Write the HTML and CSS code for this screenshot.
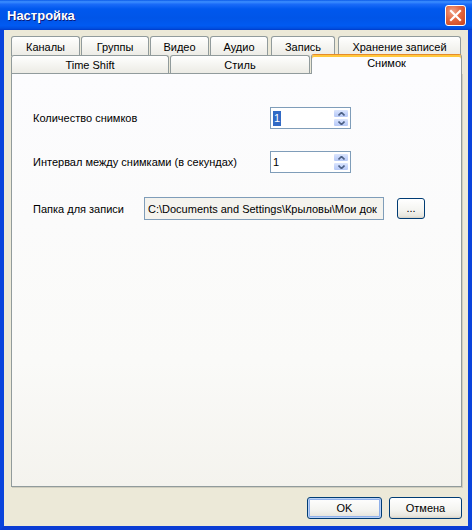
FILE: index.html
```html
<!DOCTYPE html>
<html lang="ru">
<head>
<meta charset="utf-8">
<title>Настройка</title>
<link rel="stylesheet" href="styles.css">
</head>
<body>
<div class="window">
  <div class="titlebar">
    <span class="title">Настройка</span>
    <span class="close">
      <svg width="13" height="13" viewBox="0 0 13 13"><path d="M2 2 L11 11 M11 2 L2 11" stroke="#fff" stroke-width="2.2" stroke-linecap="square"/></svg>
    </span>
  </div>
  <div class="frame">
    <div class="tabs">
      <div class="tabrow row1">
        <div class="tab t-kan">Каналы</div>
        <div class="tab t-grp">Группы</div>
        <div class="tab t-vid">Видео</div>
        <div class="tab t-aud">Аудио</div>
        <div class="tab t-zap">Запись</div>
        <div class="tab t-hran">Хранение записей</div>
      </div>
      <div class="tabrow row2">
        <div class="tab t-ts">Time Shift</div>
        <div class="tab t-stil">Стиль</div>
        <div class="tab t-snim active">Снимок</div>
      </div>
    </div>
    <div class="panel">
      <div class="row row-count">
        <span class="lbl lbl-wide">Количество снимков</span>
        <div class="spin">
          <span class="val"><span class="sel">1</span></span>
          <span class="spinbtns">
            <span class="sb"><svg width="7" height="4" viewBox="0 0 7 4"><path d="M0.5 3.5 L3.5 0.5 L6.5 3.5" fill="none" stroke="#4D6185" stroke-width="1.6"/></svg></span>
            <span class="sb"><svg width="7" height="4" viewBox="0 0 7 4"><path d="M0.5 0.5 L3.5 3.5 L6.5 0.5" fill="none" stroke="#4D6185" stroke-width="1.6"/></svg></span>
          </span>
        </div>
      </div>
      <div class="row row-interval">
        <span class="lbl lbl-wide">Интервал между снимками (в секундах)</span>
        <div class="spin">
          <span class="val">1</span>
          <span class="spinbtns">
            <span class="sb"><svg width="7" height="4" viewBox="0 0 7 4"><path d="M0.5 3.5 L3.5 0.5 L6.5 3.5" fill="none" stroke="#4D6185" stroke-width="1.6"/></svg></span>
            <span class="sb"><svg width="7" height="4" viewBox="0 0 7 4"><path d="M0.5 0.5 L3.5 3.5 L6.5 0.5" fill="none" stroke="#4D6185" stroke-width="1.6"/></svg></span>
          </span>
        </div>
      </div>
      <div class="row row-folder">
        <span class="lbl lbl-short">Папка для записи</span>
        <div class="field">C:\Documents and Settings\Крыловы\Мои док</div>
        <button class="btn browse">...</button>
      </div>
    </div>
    <div class="footer">
      <button class="btn ok">OK</button>
      <button class="btn cancel">Отмена</button>
    </div>
  </div>
</div>
</body>
</html>
```
FILE: styles.css
```css
* { box-sizing: border-box; }
html, body { margin: 0; padding: 0; background: #fff; }
body { font-family: "Liberation Sans", Arial, sans-serif; font-size: 11px; color: #000; }

.window { width: 472px; height: 530px; display: flex; flex-direction: column; }

.titlebar {
  height: 30px;
  display: flex;
  align-items: center;
  justify-content: space-between;
  padding: 0 6px 0 7px;
  background: linear-gradient(to bottom, #0A5AE8 0%, #3D8FFF 6%, #1A6BF8 14%, #0058EE 30%, #0055E8 60%, #005AF2 85%, #0050E2 94%, #003BCB 100%);
}
.title {
  color: #fff;
  font-weight: bold;
  font-size: 13px;
  text-shadow: 1px 1px 0 #0A1C7A;
}
.close {
  width: 21px; height: 21px;
  border: 1px solid #fff;
  border-radius: 3px;
  display: flex; align-items: center; justify-content: center;
  background: radial-gradient(circle at 35% 30%, #F0A48A 0%, #E2663F 45%, #C8421C 100%);
  margin-top: 1px;
}

.frame {
  flex: 1;
  display: flex;
  flex-direction: column;
  background: #ECE9D8;
  border-left: 4px solid #0A44DC;
  border-right: 4px solid #0A44DC;
  border-bottom: 4px solid #0A3CD4;
  padding: 6px 6px 0 7px;
}

.tabs { display: flex; flex-direction: column; }
.tabrow { display: flex; position: relative; }
.row1 { height: 19px; }
.row2 { height: 18px; z-index: 1; }

.tab {
  height: 100%;
  display: flex;
  align-items: center;
  justify-content: center;
  border: 1px solid #919B9C;
  border-bottom: none;
  border-radius: 3px 3px 0 0;
  background: linear-gradient(to bottom, #FFFFFF 0%, #F7F7F4 40%, #ECEBE5 100%);
  white-space: nowrap;
}
.row1 .tab { height: 20px; }

.t-kan { width: 69px; margin-right: 1px; }
.t-grp { width: 68px; margin-right: 1px; }
.t-vid { width: 59px; margin-right: 1px; }
.t-aud { width: 58px; margin-right: 3px; }
.t-zap { width: 64px; margin-right: 3px; }
.t-hran { width: 123px; }

.t-ts { width: 158px; margin-right: 1px; }
.t-stil { width: 140px; margin-right: 1px; }
.t-snim { width: 151px; }

.tab.active {
  height: 20px;
  margin-top: -1px;
  margin-bottom: -1px;
  background: #FCFCFE;
  border-top: 1px solid #E68B2C;
  box-shadow: inset 0 2px 0 #FFC83C;
  padding-bottom: 3px;
  position: relative;
  z-index: 2;
}

.panel {
  flex: 1;
  border: 1px solid #919B9C;
  background: linear-gradient(to bottom, #FCFCFE 0%, #FAFAF8 70%, #F4F3EE 100%);
  box-shadow: 1px 1px 0 #D0CEBF;
  padding: 33px 0 0 21px;
  display: flex;
  flex-direction: column;
}

.row { display: flex; align-items: center; }
.row-interval { margin-top: 22px; }
.row-folder { margin-top: 24px; }

.lbl { white-space: nowrap; }
.lbl-wide { width: 237px; }
.lbl-short { width: 111px; }

.spin {
  width: 81px; height: 22px;
  border: 1px solid #7F9DB9;
  background: #fff;
  display: flex;
  padding: 1px;
}
.val {
  flex: 1;
  display: flex;
  align-items: center;
  padding-left: 1px;
}
.sel { background: #316AC5; color: #fff; padding: 0 1px; line-height: 15px; }
.spinbtns { width: 16px; display: flex; flex-direction: column; }
.sb {
  flex: 1;
  display: flex; align-items: center; justify-content: center;
  background: linear-gradient(to bottom, #DCE6FD 0%, #C6D5FB 50%, #B7C9F6 100%);
  border: 1px solid #fff;
  border-radius: 2px;
}

.field {
  width: 240px; height: 23px;
  border: 1px solid #7F9DB9;
  background: #F4F3EE;
  display: flex; align-items: center;
  padding-left: 3px;
  white-space: nowrap;
  overflow: hidden;
}

.btn {
  font-family: "Liberation Sans", Arial, sans-serif;
  font-size: 11px;
  color: #000;
  border: 1px solid #003C74;
  border-radius: 3px;
  background: linear-gradient(to bottom, #FFFFFF 0%, #F4F4F0 60%, #E8E6DE 90%, #D6D0C5 100%);
  padding: 0;
  display: flex; align-items: center; justify-content: center;
}
.browse { width: 28px; height: 21px; margin-left: 13px; align-items: flex-end; padding-bottom: 4px; line-height: 11px; }

.footer {
  height: 39px;
  display: flex;
  justify-content: flex-end;
  align-items: flex-start;
  padding-top: 10px;
  gap: 7px;
}
.ok { width: 75px; height: 22px; box-shadow: inset 0 0 0 1px #B9D1F6, inset 0 0 0 2px #8FB0EA; }
.cancel { width: 73px; height: 22px; }
```
